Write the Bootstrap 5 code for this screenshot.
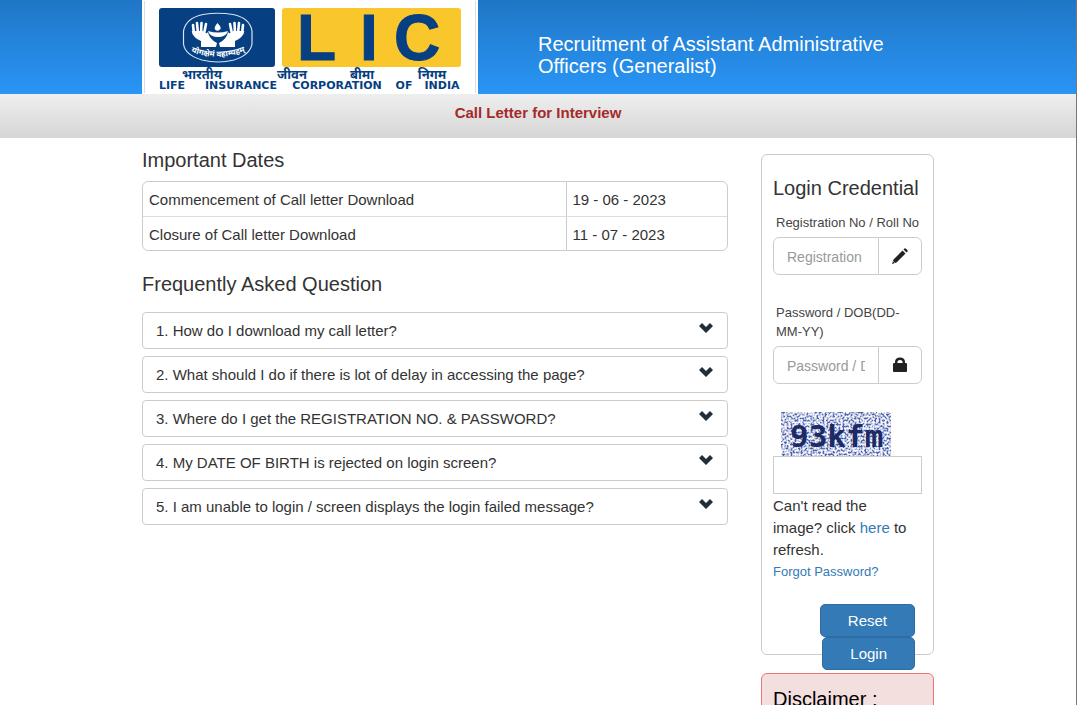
<!DOCTYPE html>
<html lang="en">
<head>
<meta charset="utf-8">
<meta name="viewport" content="width=device-width, initial-scale=1">
<title>LIC - Call Letter for Interview</title>
<link href="https://cdn.jsdelivr.net/npm/bootstrap@5.3.0/dist/css/bootstrap.min.css" rel="stylesheet">
<style>
  body { font-family: "Liberation Sans", Arial, sans-serif; font-size: 15px; line-height: 22px; color: #333; background: #fff; border-right: 1px solid #777; min-height: 100vh; overflow-x: hidden; }
  .page-wrap { width: 100%; max-width: 792px; margin: 0 auto; }
  .site-head { background: linear-gradient(#2076c5, #2995f6); }
  .logo-box { width: 336px; height: 94px; background: #fff; flex-shrink: 0; }
  h1, h2 { font-size: 20px; line-height: 22px; margin: 0; font-weight: 400; }
  .site-head h1 { color: #fff; margin-left: 60px; padding-top: 16px; }
  .sub-head { background: linear-gradient(#eee, #d6d6d6); height: 44px; padding-top: 8px; color: #a52a2a; font-weight: 700; text-align: center; }
  .main-grid { display: grid; grid-template-columns: minmax(0, 586fr) minmax(0, 173fr); column-gap: 33px; align-items: start; }
  .info-col { padding-top: 11px; }
  .dates-frame { border: 1px solid #ccc; border-radius: 6px; margin: 10px 0 22px; }
  .dates-frame td { padding: 7px 6px 5px; color: #333; background: none; border-color: #ddd; }
  .dates-frame td + td { border-left: 1px solid #ccc; width: 161px; }
  .dates-frame tr:last-child td { border-bottom: 0; padding-bottom: 4px; }
  .faq-list { row-gap: 7px; margin-top: 17px; }
  .faq-btn { width: 100%; display: flex; justify-content: space-between; align-items: flex-start; background: #fff; border: 1px solid #ccc; border-radius: 4px; padding: 7px 14px 6px 13px; text-align: left; color: #333; }
  .faq-btn svg { margin-top: 3px; flex-shrink: 0; }
  .login-panel { border: 1px solid #ccc; border-radius: 6px; padding: 22px 11px 0; margin-top: 16px; }
  .field-label { font-size: 13px; line-height: 19px; color: #444; padding-left: 3px; display: block; margin: 14px 0 5px; }
  .field-group + .field-label, .captcha-label { margin-top: 28px; }
  .login-panel .form-control { height: 38px; font-size: 14px; border-color: #ccc; padding: 7px 13px 5px; min-width: 0; color: #555; }
  .login-panel .form-control::placeholder { color: #999; }
  .login-panel .input-group-text { width: 44px; background: #fff; border-color: #ccc; padding: 0; justify-content: center; color: #222; }
  .login-panel a { color: #337ab7; text-decoration: none; }
  .help-text { padding: 1px 8px 0 0; }
  .login-panel .link-small { font-size: 13px; display: block; }
  .action-btns { margin: 21px 7px -16px 0; }
  .action-btns .btn { background: #337ab7; border-color: #2e6da4; color: #fff; font-size: 15px; line-height: 21px; padding: 5px 27px; border-radius: 5px; }
  .note-panel { border: 1px solid #ed7474; background: #f4dfdf; color: #000; border-radius: 6px; padding: 14px 11px; margin-top: 18px; }
</style>
</head>
<body>
<header class="site-head">
  <div class="page-wrap d-flex">
    <div class="logo-box">
      <svg width="336" height="94" viewBox="0 0 336 94" role="img" aria-label="Life Insurance Corporation of India">
        <path d="M2.500 1V93M333.500 1V93" stroke="#ddd"/>
        <rect x="17" y="8" width="116" height="59" rx="3" fill="#063f82"/>
        <rect x="140" y="8" width="179" height="59" rx="3" fill="#f9c62b"/>
        <path d="M61 14.500Q76 12 91 14.500Q108 18 110 31V44Q108 55 92 60Q76 64 60 60Q43 55 41.500 44V31Q44 18 61 14.500Z" fill="none" stroke="#d7e3ef" stroke-width="1.200"/>
        <g fill="none" stroke="#fff" stroke-linecap="round">
          <path d="M51 25L52 34M55 23L56 34M59.500 23L59 34M64 24L62 34" stroke-width="2.600"/>
          <path d="M49.700 31Q51 38 59 41L59 47H74L75 43Q67 39 66 32Q64 35 61 31Z" fill="#fff" stroke="none"/>
        </g>
        <g transform="matrix(-1 0 0 1 152 0)" fill="none" stroke="#fff" stroke-linecap="round">
          <path d="M51 25L52 34M55 23L56 34M59.500 23L59 34M64 24L62 34" stroke-width="2.600"/>
          <path d="M49.700 31Q51 38 59 41L59 47H74L75 43Q67 39 66 32Q64 35 61 31Z" fill="#fff" stroke="none"/>
        </g>
        <path d="M66 31Q76 34 86 31Q84 37 76 37Q68 37 66 31ZM75.500 23Q71 28 73.500 30Q76 32 78.500 29Q79.500 27 75.500 23Z" fill="#fff"/>
        <path id="motto" d="M49 52Q76 62 105 51" fill="none"/>
        <text font-family="Noto Sans, sans-serif" font-size="8" font-weight="700" fill="#fff"><textPath href="#motto">योगक्षेमं वहाम्यहम्</textPath></text>
        <g font-family="Liberation Sans, sans-serif" font-size="64" font-weight="700" fill="#063f82" stroke="#063f82">
          <text x="155" y="60">L</text><text x="218" y="60">I</text><text x="252" y="60">C</text>
        </g>
        <g font-family="Noto Sans, sans-serif" font-size="13" font-weight="700" fill="#063f82" text-anchor="middle">
          <text x="60" y="79">भारतीय</text><text x="150" y="79">जीवन</text><text x="220" y="79">बीमा</text><text x="290" y="79">निगम</text>
        </g>
        <g font-family="DejaVu Sans, sans-serif" font-size="11" font-weight="700" fill="#063f82" text-anchor="middle">
          <text x="30" y="89">LIFE</text><text x="99" y="89">INSURANCE</text><text x="195" y="89">CORPORATION</text><text x="262" y="89">OF</text><text x="300" y="89">INDIA</text>
        </g>
      </svg>
    </div>
    <h1 class="align-self-center">Recruitment of Assistant Administrative Officers (Generalist)</h1>
  </div>
</header>
<div class="sub-head">Call Letter for Interview</div>

<main class="page-wrap main-grid">
  <section class="info-col">
    <h2>Important Dates</h2>
    <div class="dates-frame">
      <table class="table mb-0">
        <tbody>
          <tr><td>Commencement of Call letter Download</td><td>19 - 06 - 2023</td></tr>
          <tr><td>Closure of Call letter Download</td><td>11 - 07 - 2023</td></tr>
        </tbody>
      </table>
    </div>
    <h2>Frequently Asked Question</h2>
    <div class="d-grid faq-list">
      <button type="button" class="faq-btn">1. How do I download my call letter?<svg width="14" height="10" viewBox="0 0 14 10"><path d="M0 3L3 0L7 4L11 0L14 3L7 10Z" fill="#222f3a"/></svg></button>
      <button type="button" class="faq-btn">2. What should I do if there is lot of delay in accessing the page?<svg width="14" height="10" viewBox="0 0 14 10"><path d="M0 3L3 0L7 4L11 0L14 3L7 10Z" fill="#222f3a"/></svg></button>
      <button type="button" class="faq-btn">3. Where do I get the REGISTRATION NO. &amp; PASSWORD?<svg width="14" height="10" viewBox="0 0 14 10"><path d="M0 3L3 0L7 4L11 0L14 3L7 10Z" fill="#222f3a"/></svg></button>
      <button type="button" class="faq-btn">4. My DATE OF BIRTH is rejected on login screen?<svg width="14" height="10" viewBox="0 0 14 10"><path d="M0 3L3 0L7 4L11 0L14 3L7 10Z" fill="#222f3a"/></svg></button>
      <button type="button" class="faq-btn">5. I am unable to login / screen displays the login failed message?<svg width="14" height="10" viewBox="0 0 14 10"><path d="M0 3L3 0L7 4L11 0L14 3L7 10Z" fill="#222f3a"/></svg></button>
    </div>
  </section>

  <aside>
    <form class="login-panel">
      <h2 class="text-nowrap">Login Credential</h2>
      <label class="field-label text-nowrap" for="reg">Registration No / Roll No</label>
      <div class="input-group flex-nowrap field-group">
        <input class="form-control" id="reg" type="text" placeholder="Registration">
        <span class="input-group-text"><svg width="16" height="16" viewBox="0 0 16 16" fill="#222"><path d="M0 16L1.500 11.500L10.500 2.500L13.500 5.500L4.500 14.500ZM11.500 1.500L12.500 .5Q13.200 0 14 .8L15.300 2Q16 2.800 15.500 3.500L14.500 4.500Z"/><path d="M1.500 13.500L2.500 14.500" stroke="#fff"/></svg></span>
      </div>
      <label class="field-label" for="pass">Password / DOB(DD-MM-YY)</label>
      <div class="input-group flex-nowrap field-group">
        <input class="form-control" id="pass" type="password" placeholder="Password / DOB">
        <span class="input-group-text"><svg width="14" height="16" viewBox="0 0 14 16"><path d="M3.200 7V5Q3.200 1.700 7 1.700Q10.800 1.700 10.800 5V7" fill="none" stroke="#222" stroke-width="2.400"/><rect y="6" width="14" height="9" rx="1" fill="#222"/></svg></span>
      </div>
      <label class="d-block captcha-label" for="code">
        <svg class="d-block ms-2" width="110" height="44" viewBox="0 0 110 44" role="img" aria-label="93kfm">
          <defs>
            <filter id="speckle" x="0" y="0" width="100%" height="100%" color-interpolation-filters="sRGB">
              <feTurbulence type="fractalNoise" baseFrequency=".5" numOctaves="2" seed="8"/>
              <feColorMatrix values="0 0 0 0 .3  0 0 0 0 .38  0 0 0 0 .66  4 0 0 0 -1.700"/>
            </filter>
          </defs>
          <rect width="110" height="44" fill="#f4f6fc"/>
          <rect width="110" height="44" filter="url(#speckle)"/>
          <text x="9" y="35" font-family="DejaVu Sans Mono, monospace" font-size="31" font-weight="700" fill="#1c2a66">93kfm</text>
        </svg>
      </label>
      <input class="form-control rounded-0" id="code" type="text">
      <div class="help-text">Can't read the image? click <a href="#">here</a> to refresh.</div>
      <a class="link-small" href="#">Forgot Password?</a>
      <div class="action-btns d-flex flex-column align-items-end">
        <button type="reset" class="btn">Reset</button>
        <button type="submit" class="btn">Login</button>
      </div>
    </form>
    <div class="note-panel"><h2>Disclaimer :</h2></div>
  </aside>
</main>
<script src="https://cdn.jsdelivr.net/npm/bootstrap@5.3.0/dist/js/bootstrap.bundle.min.js"></script>
</body>
</html>
